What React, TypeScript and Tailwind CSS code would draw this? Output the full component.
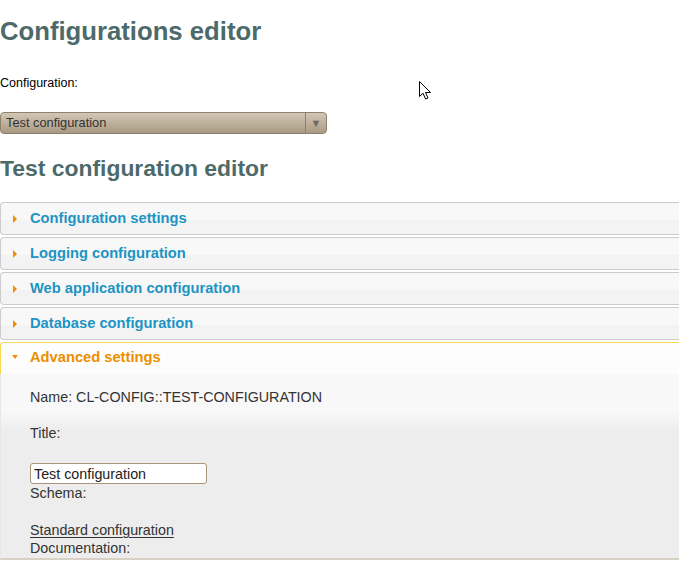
import React from 'react';

const sections = [
  'Configuration settings',
  'Logging configuration',
  'Web application configuration',
  'Database configuration',
];

function Cursor() {
  return (
    <svg
      className="absolute left-[419px] top-[81px]"
      width="13"
      height="19"
      viewBox="0 0 13 19"
    >
      <path
        d="M0.5 0.5 L0.5 15.5 L4 12.2 L6.6 18 L9 17 L6.5 11.5 L11.5 11.5 Z"
        fill="#fff"
        stroke="#000"
        strokeWidth="1"
        strokeLinejoin="round"
      />
    </svg>
  );
}

function SectionHeader({ title }: { title: string }) {
  return (
    <div className="mt-[2px] flex h-[33px] items-center rounded-l-[4px] border border-r-0 border-[#cccccc] bg-[linear-gradient(#f8f8f8_55%,#f3f3f3_55%)] first:mt-0">
      <span className="ml-[12px] mr-[13px] h-0 w-0 border-y-[4px] border-l-[4px] border-y-transparent border-l-[#ef8c08]" />
      <span className="text-[14.7px] font-bold text-[#1c94c4]">{title}</span>
    </div>
  );
}

export default function App() {
  return (
    <div className="relative h-[562px] w-[679px] overflow-hidden bg-white font-['Liberation_Sans',Arial,sans-serif] text-black">
      <h1 className="mt-[16px] text-[25.7px] font-bold leading-[30px] text-[#4d6a6a]">
        Configurations editor
      </h1>

      <div className="mt-[30px] text-[12.5px] leading-[14px]">Configuration:</div>

      <div className="mt-[22px] flex h-[22px] w-[327px] items-stretch rounded-[4px] border border-[#8f806c] bg-[linear-gradient(#d2c6b4,#a99a84)] text-[12.8px] text-[#333]">
        <div className="flex flex-1 items-center pl-[5px]">Test configuration</div>
        <div className="flex w-[21px] items-center justify-center border-l border-[#8f806c] text-[11px] text-[#6f6a62]">
          ▼
        </div>
      </div>

      <h2 className="mt-[21px] text-[22.9px] font-bold leading-[26px] text-[#4d6a6a]">
        Test configuration editor
      </h2>

      <div className="mt-[21px] w-[720px]">
        {sections.map((s) => (
          <SectionHeader key={s} title={s} />
        ))}

        <div className="mt-[2px] flex h-[32px] items-center rounded-tl-[4px] border-l border-t border-[#fbd850] bg-[#fdfdfd] pb-[3px]">
          <span className="ml-[11px] mr-[12px] h-0 w-0 border-x-[3.5px] border-t-[4px] border-x-transparent border-t-[#ef8c08]" />
          <span className="text-[14.7px] font-bold text-[#eb8f00]">Advanced settings</span>
        </div>

        <div className="border-b-2 border-l border-[#d6d0c5] border-l-[#e6e6e6] bg-[linear-gradient(#f8f8f8_0px,#f8f8f8_38px,#ededed_56px)] pl-[29px] pt-[14px] text-[14.3px] leading-[18px] text-[#333]">
          <div>Name: CL-CONFIG::TEST-CONFIGURATION</div>
          <div className="mt-[18px]">Title:</div>
          <input
            readOnly
            value="Test configuration"
            className="mt-[21px] block h-[21px] w-[177px] rounded-[3px] border border-[#a8957a] bg-white px-[3px] text-[14.3px] text-[#222] outline-none"
          />
          <div>Schema:</div>
          <div className="mt-[19px]">
            <span className="underline decoration-[#333] underline-offset-[2px]">Standard configuration</span>
          </div>
          <div className="pb-[1px]">Documentation:</div>
        </div>
      </div>

      <Cursor />
    </div>
  );
}
